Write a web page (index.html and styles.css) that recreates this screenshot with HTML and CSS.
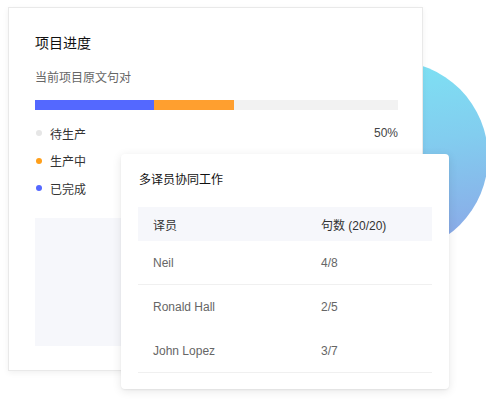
FILE: index.html
```html
<!DOCTYPE html>
<html lang="zh-CN">
<head>
<meta charset="utf-8">
<title>项目进度</title>
<link rel="stylesheet" href="styles.css">
</head>
<body>
<div class="stage">
  <div class="blob"></div>
  <section class="card progress-card">
    <h2 class="card-title">项目进度</h2>
    <div class="subtitle">当前项目原文句对</div>
    <div class="bar">
      <span class="seg seg-done" style="width:32.8%"></span>
      <span class="seg seg-doing" style="width:22%"></span>
    </div>
    <ul class="legend">
      <li class="legend-row"><span class="dot dot-wait"></span><span class="legend-label">待生产</span><span class="legend-value">50%</span></li>
      <li class="legend-row"><span class="dot dot-doing"></span><span class="legend-label">生产中</span></li>
      <li class="legend-row"><span class="dot dot-done"></span><span class="legend-label">已完成</span></li>
    </ul>
    <div class="placeholder"></div>
  </section>
  <section class="card team-card">
    <h3 class="team-title">多译员协同工作</h3>
    <div class="table">
      <div class="tr th"><span class="td">译员</span><span class="td">句数 (20/20)</span></div>
      <div class="tr line"><span class="td">Neil</span><span class="td">4/8</span></div>
      <div class="tr"><span class="td">Ronald Hall</span><span class="td">2/5</span></div>
      <div class="tr line"><span class="td">John Lopez</span><span class="td">3/7</span></div>
    </div>
  </section>
</div>
</body>
</html>
```

FILE: styles.css
```css
* { box-sizing: border-box; }
html, body {
  margin: 0;
  padding: 0;
  background: #ffffff;
}
body {
  font-family: "Liberation Sans", "Noto Sans CJK SC", sans-serif;
  color: #333;
}
.stage {
  position: relative;
  width: 486px;
  height: 400px;
  overflow: hidden;
  padding: 7px 0 0 8px;
}
.blob {
  position: absolute;
  left: 296px;
  top: 61px;
  width: 192px;
  height: 192px;
  border-radius: 50%;
  background: linear-gradient(172deg, #7de5f4 0%, #82cdef 45%, #8ca3e6 100%);
}
.card {
  background: #fff;
}
.progress-card {
  position: relative;
  width: 415px;
  height: 364px;
  border: 1px solid #e9e9e9;
  box-shadow: 0 2px 6px rgba(0, 0, 0, 0.06);
  padding: 25px 24px 0 26px;
}
.card-title {
  margin: 0;
  font-size: 14px;
  line-height: 20px;
  font-weight: 400;
  color: #111;
}
.subtitle {
  margin-top: 16px;
  font-size: 12px;
  line-height: 18px;
  color: #666;
}
.bar {
  margin-top: 13px;
  height: 10px;
  background: #f2f2f2;
  display: flex;
}
.seg { display: block; height: 100%; }
.seg-done { background: #5468ff; }
.seg-doing { background: #ff9f2f; }
.legend {
  list-style: none;
  margin: 13px 0 0;
  padding: 0;
  display: flex;
  flex-direction: column;
  gap: 7.5px;
}
.legend-row {
  display: flex;
  align-items: center;
  height: 20px;
  font-size: 12px;
  color: #333;
}
.dot {
  width: 6px;
  height: 6px;
  border-radius: 50%;
  margin: 0 8px 0 1px;
}
.dot-wait { background: #e6e6e6; }
.dot-doing { background: #ff9f1a; }
.dot-done { background: #5468ff; }
.legend-label { flex: 1; }
.legend-value { color: #444; }
.placeholder {
  margin-top: 20px;
  height: 128px;
  background: #f6f7fb;
}
.team-card {
  position: absolute;
  left: 121px;
  top: 154px;
  width: 328px;
  height: 235px;
  border-radius: 4px;
  box-shadow: 0 2px 10px rgba(0, 0, 0, 0.1), 0 1px 2px rgba(0, 0, 0, 0.06);
  padding: 17px 17px 0 17px;
}
.team-title {
  margin: 0 0 0 1px;
  font-size: 12px;
  line-height: 18px;
  font-weight: 400;
  color: #111;
}
.table {
  margin-top: 18px;
}
.tr {
  display: grid;
  grid-template-columns: 168px 1fr;
  align-items: center;
  height: 44px;
  font-size: 12px;
  color: #666;
}
.tr.th {
  height: 34px;
  background: #f6f7fb;
  color: #333;
}
.tr.line {
  border-bottom: 1px solid #f0f0f0;
}
.td {
  padding-left: 15px;
}
```
